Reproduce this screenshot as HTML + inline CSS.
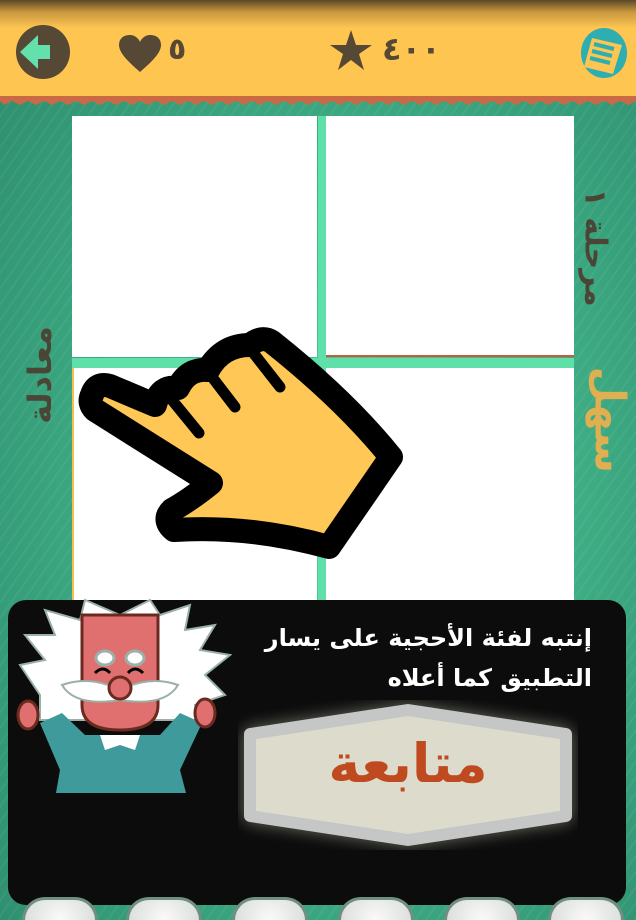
<!DOCTYPE html>
<html style="height:920px;overflow:hidden"><head><meta charset="utf-8"><style>
*{margin:0;padding:0;box-sizing:border-box}
body{width:636px;height:920px;overflow:hidden;}
#w{width:636px;height:920px;overflow:hidden;position:relative;font-family:"DejaVu Sans","Liberation Sans",sans-serif;
background:radial-gradient(ellipse at 55% 55%,#56cf9f 0%,#3fae85 45%,#2b8a6c 100%);}
.stripes{position:absolute;inset:0;background:repeating-linear-gradient(-55deg,rgba(255,255,255,0.05) 0 2px,transparent 2px 9px)}
.hdr{position:absolute;left:0;top:0;width:636px;height:98px;background:linear-gradient(#5a4828 0,#c9983f 12px,#fec551 28px,#fec551 100%)}
.zig{position:absolute;left:0;top:96px;width:636px;height:10px}
.cell{position:absolute;background:#fff}
.panel{position:absolute;left:8px;top:600px;width:618px;height:305px;background:#0c0c0c;border-radius:18px}
.vt{position:absolute;white-space:nowrap;font-weight:bold}
.circ{position:absolute;top:897px;width:76px;height:23px;border-radius:38px 38px 0 0;background:radial-gradient(circle at 50% 100%,#fafafa,#d8dcd8);border:3px solid #6f8f80;border-bottom:none}
</style></head><body><div id="w">
<div class="stripes"></div>
<div class="hdr"></div>
<svg class="zig" viewBox="0 0 636 10" preserveAspectRatio="none"><path d="M0 0H636V5 L628 9 L620 5 L612 9 L604 5 L596 9 L588 5 L580 9 L572 5 L564 9 L556 5 L548 9 L540 5 L532 9 L524 5 L516 9 L508 5 L500 9 L492 5 L484 9 L476 5 L468 9 L460 5 L452 9 L444 5 L436 9 L428 5 L420 9 L412 5 L404 9 L396 5 L388 9 L380 5 L372 9 L364 5 L356 9 L348 5 L340 9 L332 5 L324 9 L316 5 L308 9 L300 5 L292 9 L284 5 L276 9 L268 5 L260 9 L252 5 L244 9 L236 5 L228 9 L220 5 L212 9 L204 5 L196 9 L188 5 L180 9 L172 5 L164 9 L156 5 L148 9 L140 5 L132 9 L124 5 L116 9 L108 5 L100 9 L92 5 L84 9 L76 5 L68 9 L60 5 L52 9 L44 5 L36 9 L28 5 L20 9 L12 5 L4 9 L0 5Z" fill="#c96a45"/></svg>
<svg style="position:absolute;left:0;top:0" width="636" height="98">
<ellipse cx="43" cy="52" rx="27" ry="27" fill="#554834"/>
<path d="M20 52 L38 35 V45 H50 V59 H38 V69Z" fill="#63e0ab"/>
<path d="M140 72 C126 60 119 52 119 45 C119 38 124 35 130 35 C135 35 139 39 140 42 C141 39 145 35 150 35 C156 35 161 38 161 45 C161 52 154 60 140 72Z" fill="#554834"/>
<path d="M351 30 L356 45 L372 45 L359 54 L364 70 L351 60 L338 70 L343 54 L330 45 L346 45Z" fill="#554834"/>
<ellipse cx="604" cy="53" rx="23" ry="25" fill="#2eaeb0"/>
<path d="M592 38 L622 45 L613 74 L584 67Z" fill="#fec551"/>
<path d="M594 44 L614 49 M592 51 L612 56 M590 58 L610 63" stroke="#2eaeb0" stroke-width="4"/>
</svg>
<div style="position:absolute;left:168px;top:32px;font-size:30px;font-weight:bold;color:#554834">٥</div>
<div style="position:absolute;left:382px;top:30px;font-size:32px;font-weight:bold;color:#554834;letter-spacing:8px">٤٠٠</div>
<div style="position:absolute;left:318px;top:116px;width:8px;height:484px;background:#5fe0a8"></div>
<div style="position:absolute;left:72px;top:358px;width:502px;height:10px;background:#5fe0a8"></div>
<div class="cell" style="left:72px;top:116px;width:245px;height:241px"></div>
<div class="cell" style="left:326px;top:116px;width:248px;height:241px;border-bottom:2px solid #c95a3a"></div>
<div class="cell" style="left:72px;top:368px;width:245px;height:232px;border-left:2px solid #f0c050"></div>
<div class="cell" style="left:326px;top:368px;width:248px;height:232px"></div>
<div class="vt" style="left:-15px;top:356px;width:110px;text-align:center;transform:rotate(-90deg);font-size:32px;color:#4a4535">معادلة</div>
<div class="vt" style="left:535px;top:230px;width:120px;text-align:center;transform:rotate(90deg);font-size:30px;color:#4a4535">مرحلة ١</div>
<div class="vt" style="left:560px;top:392px;width:100px;text-align:center;transform:rotate(90deg);font-size:42px;color:#e0b050">سهل</div>
<svg style="position:absolute;left:0;top:0" width="636" height="920">
<path d="M92 395 Q96 382 110 386 L155 405 Q160 385 178 388 Q188 368 208 370 Q222 345 250 345 Q262 335 272 342 Q345 400 391 457 L329 547 Q250 525 174 530 Q162 520 172 510 Q190 500 211 483 L95 410 Q88 403 92 395Z" fill="#fec756" stroke="#000" stroke-width="24" stroke-linejoin="round"/>
<path d="M172 400 L199 433 M212 377 L235 407 M251 350 L280 387" stroke="#000" stroke-width="11" stroke-linecap="round"/>
</svg>
<div class="panel"></div>
<svg style="position:absolute;left:0;top:595px" width="240" height="205">
<g fill="#fff" stroke="#9ab0a8" stroke-width="2">
<path d="M40 100 L20 70 L45 65 L25 40 L55 40 L45 15 L80 25 L85 5 L120 20 L150 5 L160 20 L190 10 L185 35 L215 30 L200 55 L230 60 L205 80 L225 100 L195 110 L200 125 L40 125Z"/>
</g>
<path d="M60 175 L40 128 L62 118 L85 140 L160 140 L180 118 L202 128 L180 175 L186 198 L56 198Z" fill="#3f9a9c"/>
<path d="M100 140 L140 140 L135 155 L120 150 L105 155Z" fill="#fff"/>
<path d="M82 20 H158 V110 Q158 135 120 135 Q82 135 82 110Z" fill="#e07070" stroke="#6a2a20" stroke-width="3"/>
<ellipse cx="28" cy="120" rx="10" ry="14" fill="#e07070" stroke="#6a2a20" stroke-width="3"/>
<ellipse cx="205" cy="118" rx="10" ry="14" fill="#e07070" stroke="#6a2a20" stroke-width="3"/>
<ellipse cx="105" cy="63" rx="9" ry="7" fill="#fff" stroke="#9ab0a8" stroke-width="3"/>
<ellipse cx="135" cy="63" rx="9" ry="7" fill="#fff" stroke="#9ab0a8" stroke-width="3"/>
<path d="M95 78 Q103 70 110 78 M128 78 Q135 70 143 78" stroke="#000" stroke-width="3" fill="none"/>
<path d="M62 90 Q90 80 120 95 Q150 80 178 90 Q165 112 120 105 Q75 112 62 90Z" fill="#fff" stroke="#9ab0a8" stroke-width="2"/>
<circle cx="120" cy="93" r="11" fill="#e07070" stroke="#6a2a20" stroke-width="3"/>
</svg>
<div style="position:absolute;left:240px;top:618px;width:360px;text-align:right;direction:rtl;color:#fff;font-size:24px;line-height:40px;font-weight:bold;padding-right:8px">إنتبه لفئة الأحجية على يسار<br>التطبيق كما أعلاه&nbsp;</div>
<svg style="position:absolute;left:238px;top:700px" width="340" height="150">
<path d="M12 34 L170 10 L328 34 L328 116 L170 140 L12 116Z" fill="#dddbcc" stroke="#c5c6c6" stroke-width="12" stroke-linejoin="round" style="filter:drop-shadow(0 0 8px rgba(255,255,230,0.4))"/>
</svg>
<div style="position:absolute;left:248px;top:732px;width:320px;text-align:center;font-size:54px;font-weight:bold;color:#c04a20">متابعة</div>
<div class="circ" style="left:22px"></div><div class="circ" style="left:126px"></div><div class="circ" style="left:232px"></div><div class="circ" style="left:338px"></div><div class="circ" style="left:444px"></div><div class="circ" style="left:548px"></div>
</div></body></html>
